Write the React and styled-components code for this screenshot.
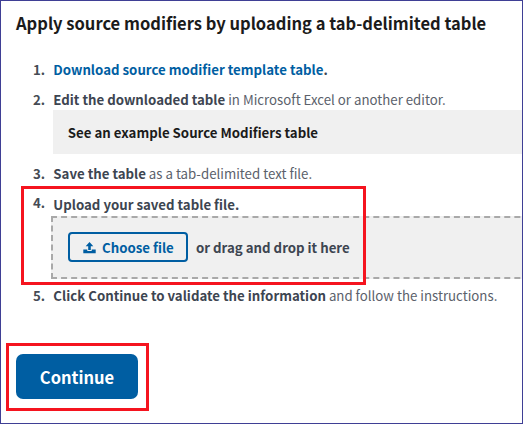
import React from 'react';
import styled, { createGlobalStyle } from 'styled-components';

const GlobalStyle = createGlobalStyle`
  * { box-sizing: border-box; }
  body { margin: 0; background: #fff; }
`;

const Page = styled.main`
  position: relative;
  width: 523px;
  height: 424px;
  overflow: hidden;
  background: #fff;
  border: 1px solid #3f3f95;
  padding: 10px 0 0 15px;
  font-family: 'Noto Sans CJK SC', 'Open Sans', sans-serif;
  font-size: 13.25px;
  color: #5b616b;
  white-space: nowrap;
`;

const Title = styled.h1`
  margin: 0 0 25px;
  font-size: 16.55px;
  line-height: 24px;
  font-weight: 700;
  color: #1b1b1b;
`;

const Steps = styled.ol`
  list-style: none;
  margin: 0;
  padding: 0 0 0 17px;
`;

const Step = styled.li`
  display: grid;
  grid-template-columns: 20.3px 1fr;
  margin-bottom: ${(p) => p.$gap || 0}px;
  line-height: 20px;
`;

const Marker = styled.span`
  font-weight: 700;
  color: #454b54;
  margin-top: ${(p) => p.$shift || 0}px;
`;

const Strong = styled.strong`
  font-weight: 700;
  color: #3d4551;
`;

const Link = styled.a`
  color: #005ea2;
  text-decoration: none;
  cursor: pointer;
`;

const Example = styled.div`
  height: 44px;
  margin: 0 0 0 -0.5px;
  padding-left: 15px;
  background: #f0f0f0;
  color: #1b1b1b;
  font-weight: 700;
  line-height: 46px;
`;

const DropZone = styled.div`
  display: flex;
  align-items: center;
  gap: 8px;
  width: 560px;
  height: 63px;
  margin: 1px 0 0 -2.3px;
  padding-left: 15px;
  background: #f0f0f0;
  border: 2px dashed #a9a9a9;
`;

const FileButton = styled.button`
  display: flex;
  align-items: center;
  gap: 6px;
  width: 120px;
  height: 30px;
  margin-bottom: 1px;
  padding: 1px 0 0 13px;
  border: 2px solid #005ea2;
  border-radius: 4px;
  background: #f0f0f0;
  color: #005ea2;
  font: inherit;
  font-weight: 700;
`;

const ContinueButton = styled.button`
  display: block;
  width: 122px;
  height: 45px;
  margin-top: 48px;
  padding: 0;
  border: 0;
  border-radius: 7px;
  background: #005ea2;
  color: #fff;
  font: inherit;
  font-size: 16.5px;
  font-weight: 700;
`;

const Highlight = styled.div`
  position: absolute;
  left: ${(p) => p.$x}px;
  top: ${(p) => p.$y}px;
  width: ${(p) => p.$w}px;
  height: ${(p) => p.$h}px;
  border: 3px solid #f5141f;
  pointer-events: none;
`;

const UploadIcon = () => (
  <svg width="13" height="12" viewBox="0 0 13 12" fill="currentColor" aria-hidden="true">
    <path d="M6.5 0 10.3 4.2H7.8V8H5.2V4.2H2.7Z" />
    <path d="M.3 7.5H4.3V9H8.7V7.5H12.7V11.3H.3Z" />
  </svg>
);

export default function App() {
  return (
    <>
      <GlobalStyle />
      <Page>
        <Title>Apply source modifiers by uploading a tab-delimited table</Title>
        <Steps>
          <Step $gap={10}>
            <Marker>1.</Marker>
            <Strong><Link>Download source modifier template table</Link>.</Strong>
          </Step>
          <Step $gap={10}>
            <Marker>2.</Marker>
            <div>
              <div><Strong>Edit the downloaded table</Strong> in Microsoft Excel or another editor.</div>
              <Example>See an example Source Modifiers table</Example>
            </div>
          </Step>
          <Step $gap={11}>
            <Marker>3.</Marker>
            <div><Strong>Save the table</Strong> as a tab-delimited text file.</div>
          </Step>
          <Step $gap={7}>
            <Marker $shift={-2}>4.</Marker>
            <div>
              <Strong>Upload your saved table file.</Strong>
              <DropZone>
                <FileButton><UploadIcon />Choose file</FileButton>
                <Strong>or drag and drop it here</Strong>
              </DropZone>
            </div>
          </Step>
          <Step>
            <Marker>5.</Marker>
            <div><Strong>Click Continue to validate the information</Strong> and follow the instructions.</div>
          </Step>
        </Steps>
        <ContinueButton>Continue</ContinueButton>
        <Highlight $x={20} $y={185} $w={345} $h={99} />
        <Highlight $x={5} $y={342} $w={143} $h={68} />
      </Page>
    </>
  );
}
